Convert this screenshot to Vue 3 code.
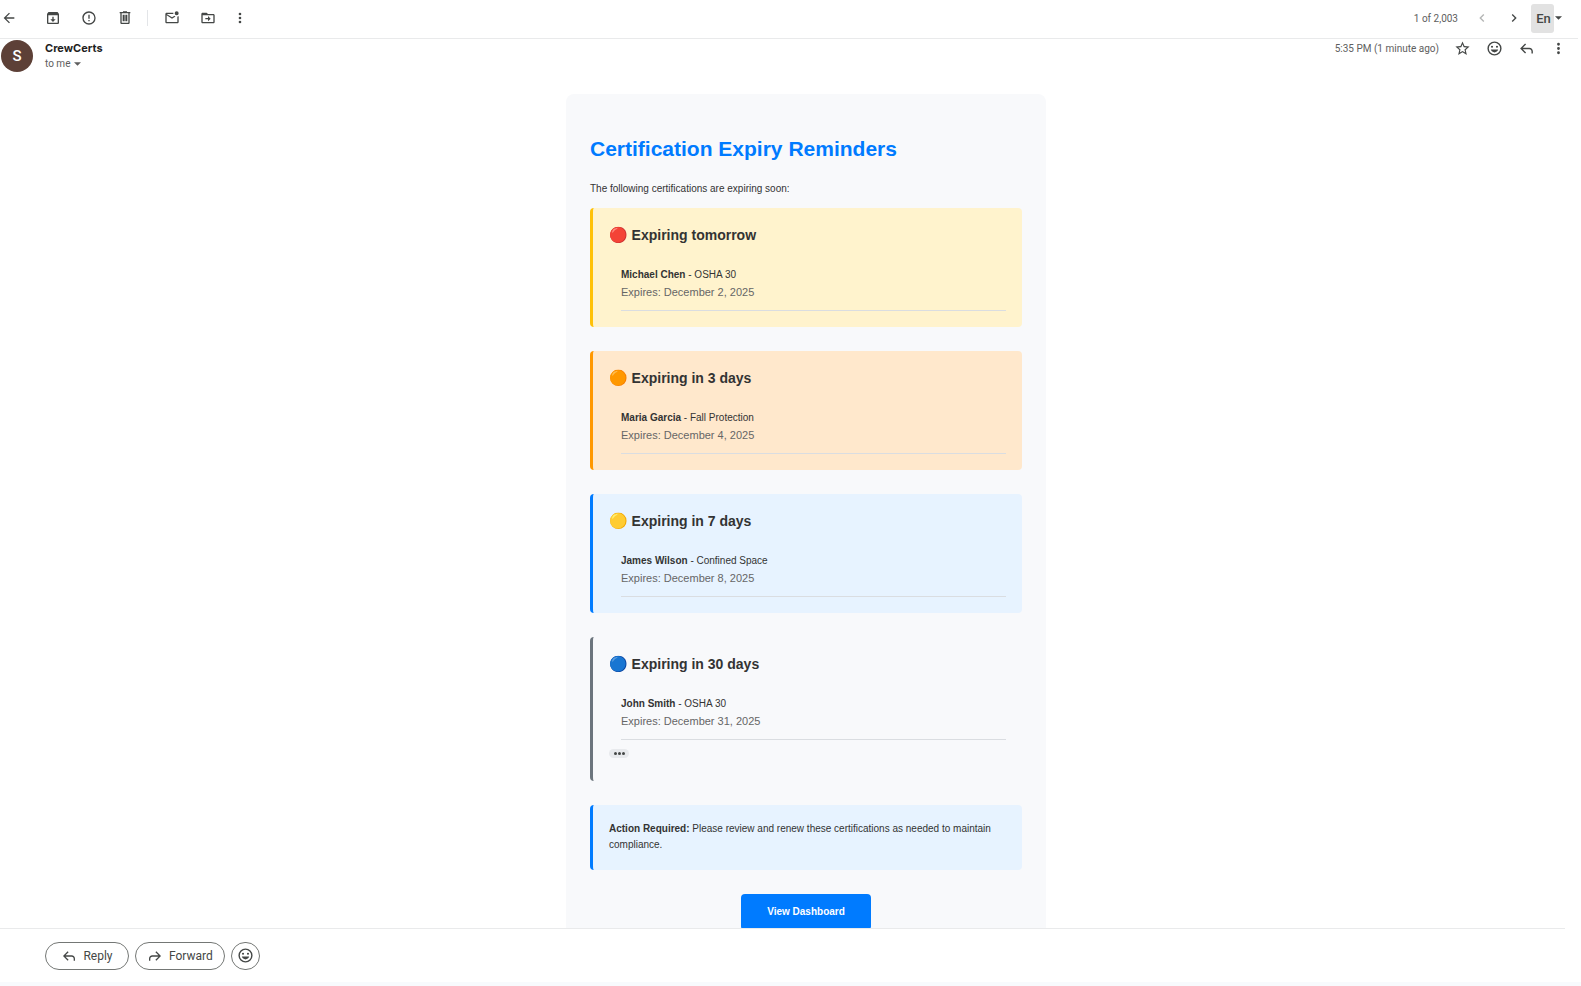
<template>
  <div class="mail-view">
    <header class="toolbar">
      <div class="actions">
        <button
          v-for="action in toolbarActions"
          :key="action.label"
          class="icon-btn"
          :class="action.spacing"
          :aria-label="action.label"
        >
          <svg class="icon" viewBox="0 0 24 24"><path :d="icons[action.icon]" /></svg>
        </button>
      </div>
      <div class="pager">
        <span class="count">1 of 2,003</span>
        <button class="icon-btn disabled" aria-label="Newer" disabled>
          <svg class="icon" viewBox="0 0 24 24"><path :d="icons.left" /></svg>
        </button>
        <button class="icon-btn" aria-label="Older">
          <svg class="icon" viewBox="0 0 24 24"><path :d="icons.right" /></svg>
        </button>
        <div class="input-tools">
          <button class="lang">En</button>
          <button class="lang-menu" aria-label="Select input tool">
            <svg class="caret" viewBox="0 0 8 4"><path d="M0 0h8L4 4z" /></svg>
          </button>
        </div>
      </div>
    </header>

    <section class="message-head">
      <div class="avatar">S</div>
      <div class="sender">
        <h3>CrewCerts</h3>
        <button class="recipient">
          to me
          <svg class="caret" viewBox="0 0 8 4"><path d="M0 0h8L4 4z" /></svg>
        </button>
      </div>
      <div class="message-actions">
        <span class="time">5:35 PM (1 minute ago)</span>
        <button
          v-for="action in messageActions"
          :key="action.label"
          class="icon-btn"
          :aria-label="action.label"
        >
          <svg class="icon" viewBox="0 0 24 24"><path :d="icons[action.icon]" /></svg>
        </button>
      </div>
    </section>

    <main class="message-body">
      <article class="email">
        <h1>Certification Expiry Reminders</h1>
        <p class="intro">The following certifications are expiring soon:</p>

        <section
          v-for="group in groups"
          :key="group.title"
          class="card"
          :class="group.tone"
        >
          <h2><span class="dot">{{ group.dot }}</span> {{ group.title }}</h2>
          <div class="cert">
            <div class="cert-name">
              <strong>{{ group.name }}</strong> - {{ group.cert }}
            </div>
            <div class="cert-date">Expires: {{ group.date }}</div>
          </div>
          <button v-if="group.trimmed" class="trimmed" aria-label="Show trimmed content">
            <i></i><i></i><i></i>
          </button>
        </section>

        <section class="card week notice">
          <p>
            <strong>Action Required:</strong> Please review and renew these
            certifications as needed to maintain compliance.
          </p>
        </section>

        <div class="cta">
          <a href="#">View Dashboard</a>
        </div>
      </article>
    </main>

    <footer class="reply-bar">
      <button class="pill">
        <svg class="icon" viewBox="0 0 24 24"><path :d="icons.reply" /></svg>
        Reply
      </button>
      <button class="pill">
        <svg class="icon" viewBox="0 0 24 24"><path :d="icons.forward" /></svg>
        Forward
      </button>
      <button class="pill round" aria-label="Add reaction">
        <svg class="icon" viewBox="0 0 24 24"><path :d="icons.smile" /></svg>
      </button>
    </footer>
  </div>
</template>

<script setup>
const icons = {
  back: "M20 11H7.83l5.59-5.59L12 4l-8 8 8 8 1.41-1.41L7.83 13H20z",
  archive:
    "M20.54 5.23l-1.39-1.68C18.88 3.21 18.47 3 18 3H6c-.47 0-.88.21-1.16.55L3.46 5.23C3.17 5.57 3 6.02 3 6.5V19c0 1.1.9 2 2 2h14c1.1 0 2-.9 2-2V6.5c0-.48-.17-.93-.46-1.27zM19 19H5V8h14zM11 10v4H8l4 4 4-4h-3v-4z",
  spam: "M11 15h2v2h-2zm0-8h2v6h-2zm1-5C6.47 2 2 6.5 2 12a10 10 0 1 0 10-10zm0 18a8 8 0 1 1 0-16 8 8 0 0 1 0 16z",
  trash:
    "M15 3V2H9v1H4v2h1v14c0 1.1.9 2 2 2h10c1.1 0 2-.9 2-2V5h1V3zm2 16H7V5h10zM8.5 7h3v10h-3zm4 0h3v10h-3z",
  unread:
    "M22 8.98V18c0 1.1-.9 2-2 2H4c-1.1 0-2-.9-2-2V6c0-1.1.9-2 2-2h10.1c-.1.32-.1.66-.1 1s.04.68.1 1H4l8 5 3.67-2.29c.47.43 1.02.76 1.63.98L12 13 4 8v10h16V9.9c.74-.15 1.42-.48 2-.92zM16 5a3 3 0 1 0 6 0 3 3 0 0 0-6 0z",
  move: "M20 6h-8l-2-2H4c-1.1 0-2 .9-2 2v12c0 1.1.9 2 2 2h16c1.1 0 2-.9 2-2V8c0-1.1-.9-2-2-2zm0 12H4V8h16zm-8-1 4-4-4-4v3H8v2h4z",
  more: "M12 8a2 2 0 1 0 0-4 2 2 0 0 0 0 4zm0 2a2 2 0 1 0 0 4 2 2 0 0 0 0-4zm0 6a2 2 0 1 0 0 4 2 2 0 0 0 0-4z",
  left: "M15.41 7.41 14 6l-6 6 6 6 1.41-1.41L10.83 12z",
  right: "M8.59 16.59 10 18l6-6-6-6-1.41 1.41L13.17 12z",
  star: "M22 9.24l-7.19-.62L12 2 9.19 8.63 2 9.24l5.46 4.73L5.82 21 12 17.27 18.18 21l-1.63-7.03zM12 15.4l-3.76 2.27 1-4.28-3.32-2.88 4.38-.38L12 6.1l1.71 4.04 4.38.38-3.32 2.88 1 4.28z",
  smile:
    "M12 2a10 10 0 1 0 0 20 10 10 0 0 0 0-20zm0 18a8 8 0 1 1 0-16 8 8 0 0 1 0 16zM8.5 11a1.5 1.5 0 1 0 0-3 1.5 1.5 0 0 0 0 3zm7 0a1.5 1.5 0 1 0 0-3 1.5 1.5 0 0 0 0 3zM6.8 13.5c.8 2.3 2.8 4 5.2 4s4.4-1.7 5.2-4z",
  reply:
    "M10 5 3 12l7 7 1.4-1.4L6.8 13H16c1.7 0 3 1.3 3 3v3h2v-3c0-2.8-2.2-5-5-5H6.8l4.6-4.6z",
  forward:
    "M14 5l7 7-7 7-1.4-1.4L17.2 13H8c-1.7 0-3 1.3-3 3v3H3v-3c0-2.8 2.2-5 5-5h9.2l-4.6-4.6z",
};

const toolbarActions = [
  { icon: "back", label: "Back to Inbox", spacing: "first" },
  { icon: "archive", label: "Archive" },
  { icon: "spam", label: "Report spam" },
  { icon: "trash", label: "Delete" },
  { icon: "unread", label: "Mark as unread", spacing: "divided" },
  { icon: "move", label: "Move to" },
  { icon: "more", label: "More", spacing: "last" },
];

const messageActions = [
  { icon: "star", label: "Star" },
  { icon: "smile", label: "Add reaction" },
  { icon: "reply", label: "Reply" },
  { icon: "more", label: "More options" },
];

const groups = [
  {
    tone: "tomorrow",
    dot: "🔴",
    title: "Expiring tomorrow",
    name: "Michael Chen",
    cert: "OSHA 30",
    date: "December 2, 2025",
  },
  {
    tone: "soon",
    dot: "🟠",
    title: "Expiring in 3 days",
    name: "Maria Garcia",
    cert: "Fall Protection",
    date: "December 4, 2025",
  },
  {
    tone: "week",
    dot: "🟡",
    title: "Expiring in 7 days",
    name: "James Wilson",
    cert: "Confined Space",
    date: "December 8, 2025",
  },
  {
    tone: "month",
    dot: "🔵",
    title: "Expiring in 30 days",
    name: "John Smith",
    cert: "OSHA 30",
    date: "December 31, 2025",
    trimmed: true,
  },
];
</script>

<style>
body {
  margin: 0;
  background: #fff;
}
</style>

<style scoped>
.mail-view {
  display: flex;
  flex-direction: column;
  height: 100vh;
  box-sizing: border-box;
  border-bottom: 4px solid #f8fafd;
  font-family: Roboto, Inter, sans-serif;
  color: #444746;
  overflow: hidden;
}

button {
  padding: 0;
  border: 0;
  background: none;
  font: inherit;
  color: inherit;
  cursor: pointer;
}

.icon {
  display: block;
  width: 16px;
  height: 16px;
  fill: currentColor;
}

.caret {
  width: 7px;
  height: 4px;
  fill: currentColor;
}

/* Toolbar */
.toolbar {
  display: flex;
  justify-content: space-between;
  align-items: center;
  flex: none;
  height: 36px;
  margin-right: 3px;
  padding-bottom: 2px;
  border-bottom: 1px solid #e9eaeb;
}

.actions {
  display: flex;
  align-items: center;
  gap: 20px;
  padding-left: 1px;
}

.first {
  margin-right: 8px;
}

.divided {
  margin-left: -6px;
  padding-left: 16px;
  border-left: 1px solid #e3e5e8;
}

.last {
  margin-left: -4px;
}

.pager {
  display: flex;
  align-items: center;
  gap: 16px;
  padding-right: 16px;
}

.count {
  color: #5e5e5e;
  font-size: 10px;
}

.disabled {
  opacity: 0.4;
}

.input-tools {
  display: flex;
  align-items: center;
  gap: 1px;
  margin-left: -7px;
}

.lang {
  width: 23px;
  height: 29px;
  padding: 1px 0 0 2px;
  border-radius: 3px;
  background: #e2e2e2;
  font-size: 13px;
  font-weight: 500;
}

.lang-menu {
  display: flex;
}

/* Sender row */
.message-head {
  display: flex;
  flex: none;
  align-items: flex-start;
  padding: 1px 14px 0 1px;
}

.avatar {
  width: 32px;
  height: 32px;
  border-radius: 50%;
  background: #5d4037;
  color: #fff;
  font-size: 15px;
  font-weight: 500;
  line-height: 32px;
  text-align: center;
}

.sender {
  flex: 1;
  padding-left: 12px;
}

.sender h3 {
  margin: 0;
  color: #1f1f1f;
  font-family: Inter, sans-serif;
  font-size: 11px;
  font-weight: 700;
  line-height: 16px;
}

.recipient {
  display: flex;
  align-items: center;
  gap: 4px;
  color: #5e5e5e;
  font-size: 10px;
  line-height: 16px;
}

.message-actions {
  display: flex;
  align-items: center;
  gap: 15px;
}

.message-actions .icon {
  width: 17px;
  height: 17px;
}

.time {
  color: #5e5e5e;
  font-size: 10px;
}

/* Email content */
.message-body {
  flex: 1;
  min-height: 0;
  padding: 22px 0 0 31px;
  overflow: hidden;
}

.email {
  box-sizing: border-box;
  max-width: 480px;
  margin: 0 auto;
  padding: 41px 24px;
  border-radius: 8px;
  background: #f8f9fb;
  color: #333;
  font-family: "Liberation Sans", Arial, sans-serif;
  font-size: 10px;
  line-height: 16px;
}

h1 {
  margin: 0;
  color: #007bff;
  font-size: 21px;
  line-height: 28px;
}

.intro {
  margin: 18px 0 11px;
}

.card {
  margin-bottom: 24px;
  padding: 16px;
  border-left: 3px solid;
  border-radius: 4px;
}

.tomorrow {
  border-color: #ffc107;
  background: #fff3cd;
}

.soon {
  border-color: #ff9800;
  background: #ffe8cc;
}

.week {
  border-color: #007bff;
  background: #e7f3ff;
}

.month {
  border-color: #6c757d;
}

h2 {
  margin: 0 0 20px;
  font-size: 14px;
  line-height: 22px;
}

.dot {
  font-family: "Noto Color Emoji", sans-serif;
  font-size: 15px;
  line-height: 1;
}

.cert {
  margin-left: 12px;
  padding-bottom: 9px;
  border-bottom: 1px solid #dadde1;
}

.cert-name {
  line-height: 17px;
}

.cert-date {
  color: #666;
  font-size: 11px;
  line-height: 18px;
}

.trimmed {
  display: flex;
  justify-content: center;
  align-items: center;
  gap: 1px;
  width: 20px;
  height: 9px;
  margin: 9px 0 7px;
  border-radius: 5px;
  background: #e8eaed;
}

.trimmed i {
  width: 3px;
  height: 3px;
  border-radius: 50%;
  background: #444746;
}

.notice p {
  margin: 0 0 1px;
}

.cta {
  text-align: center;
}

.cta a {
  display: inline-block;
  padding: 10px 26px;
  border-radius: 4px;
  background: #007bff;
  color: #fff;
  font-weight: 700;
  text-decoration: none;
}

/* Reply bar */
.reply-bar {
  display: flex;
  flex: none;
  align-items: center;
  gap: 6px;
  height: 53px;
  margin-right: 16px;
  padding-left: 45px;
  border-top: 1px solid #e9eaeb;
}

.pill {
  display: flex;
  align-items: center;
  justify-content: center;
  gap: 6px;
  min-width: 84px;
  height: 28px;
  padding: 0 11px;
  border: 1px solid #747775;
  border-radius: 14px;
  box-sizing: border-box;
  font-size: 12px;
}

.round {
  min-width: 29px;
  padding: 0;
}

.round .icon {
  width: 17px;
  height: 17px;
}
</style>
